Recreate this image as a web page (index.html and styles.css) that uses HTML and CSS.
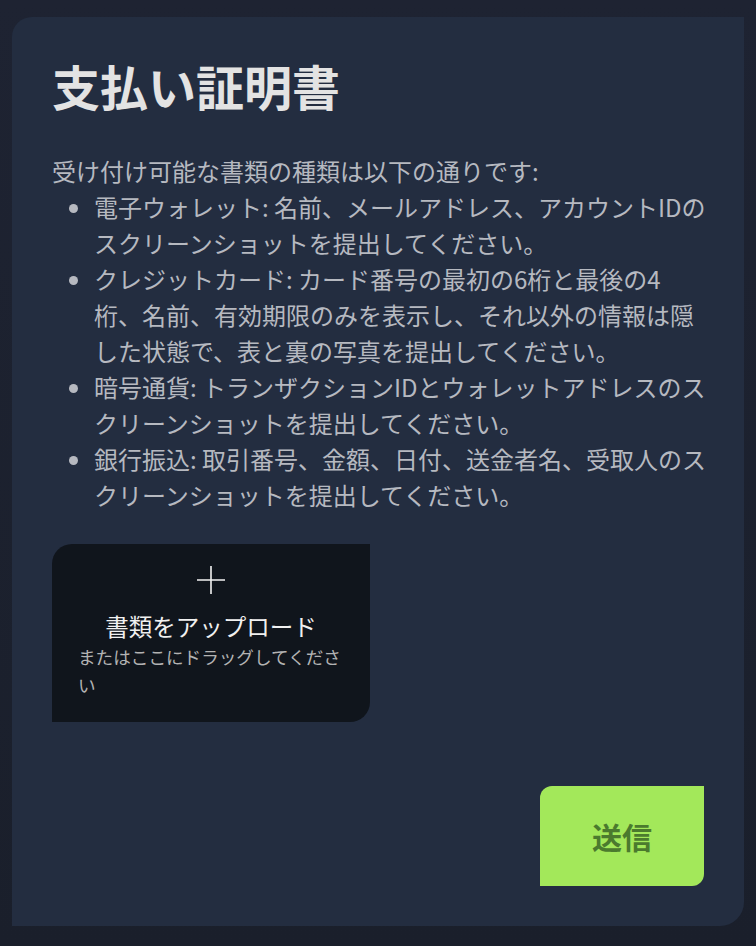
FILE: index.html
```html
<!DOCTYPE html>
<html lang="ja">
<head>
<meta charset="utf-8">
<title>支払い証明書</title>
<link rel="stylesheet" href="styles.css">
</head>
<body>
<main class="card">
  <h1 class="title">支払い証明書</h1>
  <p class="intro">受け付け可能な書類の種類は以下の通りです:</p>
  <ul class="doc-list">
    <li>電子ウォレット: 名前、メールアドレス、アカウントIDのスクリーンショットを提出してください。</li>
    <li>クレジットカード: カード番号の最初の6桁と最後の4桁、名前、有効期限のみを表示し、それ以外の情報は隠した状態で、表と裏の写真を提出してください。</li>
    <li>暗号通貨: トランザクションIDとウォレットアドレスのスクリーンショットを提出してください。</li>
    <li>銀行振込: 取引番号、金額、日付、送金者名、受取人のスクリーンショットを提出してください。</li>
  </ul>
  <div class="upload">
    <svg class="upload-icon" width="30" height="30" viewBox="0 0 30 30" aria-hidden="true">
      <path d="M15 1V29M1 15H29" stroke="#f2f2f2" stroke-width="1.6" fill="none"/>
    </svg>
    <div class="upload-title">書類をアップロード</div>
    <div class="upload-sub">またはここにドラッグしてください</div>
  </div>
  <div class="actions">
    <button class="submit" type="button">送信</button>
  </div>
</main>
</body>
</html>
```

FILE: styles.css
```css
html, body {
  margin: 0;
  padding: 0;
}

body {
  height: 946px;
  background: linear-gradient(#1e2332, #1a1f2b);
  font-family: "Noto Sans CJK JP", "Noto Sans", sans-serif;
  display: flex;
  flex-direction: column;
  box-sizing: border-box;
  padding: 17px 12px 20px 12px;
}

.card {
  flex: 1;
  background: #232d40;
  border-radius: 20px 0 24px 0;
  padding: 40px;
  display: flex;
  flex-direction: column;
}

.title {
  margin: 0 0 38px 0;
  font-size: 48px;
  line-height: 1.2;
  font-weight: 700;
  color: #e3e3e3;
}

.intro {
  margin: 0;
  font-size: 24px;
  line-height: 36px;
  color: #b6b9c0;
}

.doc-list {
  margin: 0 -3.5px 0 0;
  padding-left: 42px;
  font-size: 24px;
  line-height: 36px;
  color: #b6b9c0;
}

.upload {
  margin-top: 31px;
  width: 318px;
  height: 178px;
  box-sizing: border-box;
  padding: 21px 26px 0 26px;
  background: #10151c;
  border-radius: 20px 0 20px 0;
  display: flex;
  flex-direction: column;
  align-items: center;
}

.upload-icon {
  display: block;
}

.upload-title {
  margin-top: 16px;
  font-size: 23.5px;
  line-height: 30px;
  font-weight: 400;
  color: #f0f0f0;
}

.upload-sub {
  margin-top: 2px;
  font-size: 17.6px;
  line-height: 28px;
  color: #b3b3b3;
}

.actions {
  margin-top: auto;
  display: flex;
  justify-content: flex-end;
}

.submit {
  width: 164px;
  height: 100px;
  border: none;
  border-radius: 12px 0 12px 0;
  background: #a3e85a;
  color: #4b7a2e;
  font-family: "Noto Sans CJK JP", "Noto Sans", sans-serif;
  font-size: 30px;
  font-weight: 700;
  padding: 0;
}
```
